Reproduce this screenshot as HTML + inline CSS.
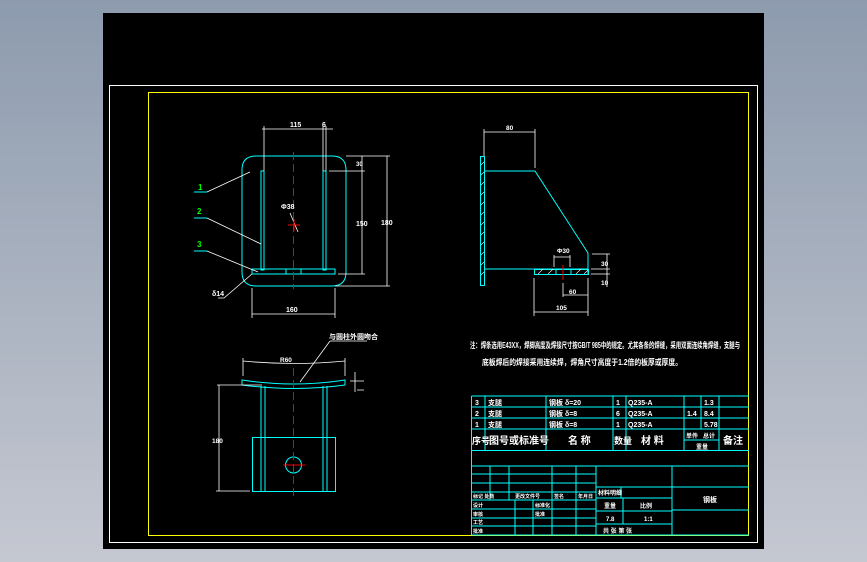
<!DOCTYPE html>
<html><head><meta charset="utf-8"><style>
html,body{margin:0;padding:0;width:867px;height:562px;overflow:hidden;background:linear-gradient(#8d9bae,#c5c8d1);}
svg{position:absolute;left:0;top:0}
text{font-family:"Liberation Sans","Noto Sans CJK SC",sans-serif;fill:#fff;font-weight:bold}
</style></head><body>
<svg width="867" height="562" viewBox="0 0 867 562">
<rect x="103" y="13" width="661" height="536" fill="#000"/>
<rect x="109.5" y="85.5" width="648" height="457" fill="none" stroke="#fff" stroke-width="1"/>
<rect x="148.5" y="92.5" width="600" height="443" fill="none" stroke="#ff0" stroke-width="1"/>

<!-- TOP VIEW -->
<g fill="none" stroke="#0ff" stroke-width="1">
<path d="M256 156 H332 Q346 156 346 170 V272 Q346 286 332 286 H256 Q242 286 242 272 V170 Q242 156 256 156 Z"/>
<rect x="261" y="171" width="3" height="99"/>
<rect x="323" y="171" width="3" height="99"/>
<rect x="252" y="269" width="83" height="5"/>
<path d="M286 269V274M301 269V274"/>
</g>
<path d="M293.5 152V289" stroke="#e00" stroke-dasharray="8,4"/>
<g stroke="#fff" fill="none" stroke-width="0.8">
<path d="M264 126V171M323 126V171M326 126V171M262 129H333"/>
<path d="M346 156H390M329 171H365M338 274H365M335 286H390M362 156V274M387 156V286"/>
<path d="M252 288V318M335 288V318M252 314H335"/>
<path d="M207 192L250 172M207 218L261 244M207 251L258 272M218 298H224L252 274M290 213L298 232"/>
</g>
<path d="M194 192H207M194 218H207M194 251H207" stroke="#0ff"/>
<path d="M288 225H300M294 219V231" stroke="#e00"/>
<g font-size="7">
<text x="290" y="127">115</text><text x="322" y="127">6</text>
<text x="356" y="166" font-size="6">30</text><text x="356" y="226">150</text><text x="381" y="225">180</text>
<text x="286" y="312">160</text><text x="212" y="296">δ14</text><text x="281" y="209">Φ38</text>
</g>
<g font-size="8" fill="#0f0"><text x="198" y="190" style="fill:#0f0">1</text><text x="197" y="214" style="fill:#0f0">2</text><text x="197" y="247" style="fill:#0f0">3</text></g>

<!-- SIDE VIEW -->
<g fill="none" stroke="#0ff">
<rect x="480.5" y="156.5" width="4" height="129"/>
<path d="M484 171H535L588 253V274M484 269H588"/>
<rect x="534.5" y="269.5" width="54" height="5"/>
<path d="M556 269V274M571 269V274"/>
</g>
<path d="M481 165l3-3M481 175l3-3M481 185l3-3M481 195l3-3M481 205l3-3M481 215l3-3M481 225l3-3M481 235l3-3M481 245l3-3M481 255l3-3M481 265l3-3M481 275l3-3M538 274l5-5M548 274l5-5M576 274l5-5M584 274l4-4" stroke="#fff" stroke-width="0.6"/>
<path d="M563 265V280" stroke="#e00"/>
<g stroke="#fff" fill="none" stroke-width="0.8">
<path d="M484 129V156M535 129V168M484 132H535M554 255V267M570 255V267M554 257H570"/>
<path d="M534 278V316M588 278V316M534 312H588M563 283V297M563 295H588"/>
<path d="M592 254H610M591 269H610M591 274H610M607 254V287"/>
</g>
<g font-size="6.5"><text x="506" y="130">80</text><text x="557" y="253">Φ30</text><text x="556" y="310">105</text><text x="569" y="294">60</text><text x="601" y="266">30</text><text x="601" y="285">10</text></g>

<!-- FRONT VIEW -->
<g fill="none" stroke="#0ff">
<path d="M242 380Q294 388 345 380V385Q294 392 242 385Z"/>
<path d="M261 386V491M265 386V491M323 386V491M327 386V491"/>
<rect x="252.5" y="437.5" width="83" height="54"/>
<circle cx="293.5" cy="465" r="8"/>
</g>
<path d="M293.5 368V500" stroke="#e00" stroke-dasharray="8,4"/>
<path d="M283 465H305" stroke="#e00"/>
<g stroke="#fff" fill="none" stroke-width="0.8">
<path d="M243 358V376M345 358V376M243 361Q294 366 345 361"/>
<path d="M217 385H262M216 491H250M219 385V491"/>
<path d="M330 341H367M330 341L300 382M355 372V392M350 381H364M357 390H364"/>
</g>
<g font-size="6.5"><text x="280" y="362">R60</text><text x="212" y="443">180</text></g>
<text x="329" y="339" font-size="7">与圆柱外圆吻合</text>

<!-- NOTES -->
<text x="470" y="348" font-size="8" textLength="270" lengthAdjust="spacingAndGlyphs">注：焊条选用E43XX，焊脚高度及焊接尺寸按GB/T 985中的规定。尤其各条的焊缝，采用双面连续角焊缝，支腿与</text>
<text x="482" y="365" font-size="8" textLength="200" lengthAdjust="spacingAndGlyphs">底板焊后的焊接采用连续焊，焊角尺寸高度于1.2倍的板厚或厚度。</text>

<!-- TABLE -->
<g stroke="#0ff" fill="none" stroke-width="1">
<path d="M471.5 396H749M471.5 407H749M471.5 418H749M471.5 429H749M471.5 450.5H749M471.5 466H749M471.5 535H749"/>
<path d="M471.5 396V535M485 396V451M546 396V451M613 396V451M626 396V451M684 396V451M701 396V429M719 396V451M684 440H719"/>
<path d="M471 474H596M471 483H596M471 492H596M471 500H596M471 509H596M471 518H596M471 526H596"/>
<path d="M490 466V500M509 466V500M552 466V535M576 466V535M596 466V535M515 500V535M533 500V535"/>
<path d="M596 487H672M596 498H672M596 511H672M596 524H672M621 487V498M623 498V524M672 466V535M672 487H749M672 510H749"/>
</g>
<g font-size="7">
<text x="475" y="405">3</text><text x="488" y="405">支腿</text><text x="549" y="405">钢板 δ=20</text><text x="616" y="405">1</text><text x="628" y="405">Q235-A</text><text x="704" y="405">1.3</text>
<text x="475" y="416">2</text><text x="488" y="416">支腿</text><text x="549" y="416">钢板 δ=8</text><text x="616" y="416">6</text><text x="628" y="416">Q235-A</text><text x="687" y="416">1.4</text><text x="704" y="416">8.4</text>
<text x="475" y="427">1</text><text x="488" y="427">支腿</text><text x="549" y="427">钢板 δ=8</text><text x="616" y="427">1</text><text x="628" y="427">Q235-A</text><text x="704" y="427">5.78</text>
<text x="472" y="444" font-size="9">序号</text><text x="489" y="444" font-size="10">图号或标准号</text><text x="568" y="444" font-size="10">名 称</text><text x="614" y="444" font-size="9">数量</text><text x="641" y="444" font-size="10">材 料</text>
<text x="686" y="438" font-size="6">单件</text><text x="703" y="438" font-size="6">总计</text><text x="696" y="449" font-size="6">重量</text><text x="723" y="444" font-size="10">备注</text>
<text x="473" y="498" font-size="5">标记 处数</text><text x="515" y="498" font-size="5">更改文件号</text><text x="554" y="498" font-size="5">签名</text><text x="578" y="498" font-size="5">年月日</text>
<text x="473" y="507" font-size="5">设计</text><text x="473" y="516" font-size="5">审核</text><text x="473" y="524" font-size="5">工艺</text><text x="473" y="533" font-size="5">批准</text>
<text x="535" y="507" font-size="5">标准化</text><text x="535" y="516" font-size="5">批准</text>
<text x="598" y="495" font-size="6">材料明细</text><text x="604" y="508" font-size="6">重量</text><text x="640" y="508" font-size="6">比例</text><text x="606" y="521" font-size="6">7.8</text><text x="644" y="521" font-size="6">1:1</text><text x="603" y="533" font-size="6">共  张 第  张</text>
<text x="703" y="502">钢板</text>
</g>
</svg>
</body></html>
